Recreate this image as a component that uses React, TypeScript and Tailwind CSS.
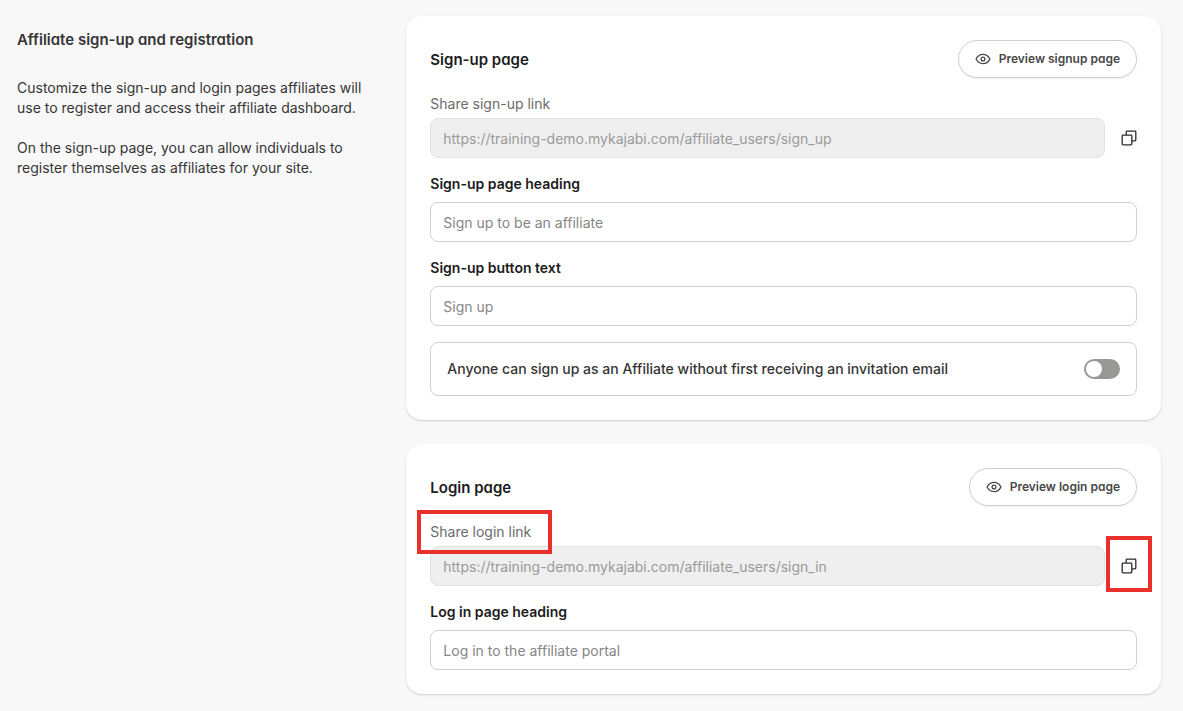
import React, { useState } from 'react';

const EyeIcon = () => (
  <svg className="size-4 shrink-0" viewBox="0 0 16 16" fill="none" stroke="currentColor" strokeWidth="1.3" aria-hidden="true">
    <path d="M1.2 8.3a.6.6 0 0 1 0-.6C2.6 5.2 5 3.4 8 3.400s5.400 1.800 6.800 4.300a.6.6 0 0 1 0 .6c-1.400 2.500-3.800 4.300-6.800 4.300S2.600 10.800 1.200 8.300Z" />
    <circle cx="8" cy="8" r="1.9" />
  </svg>
);

const CopyIcon = () => (
  <svg className="size-4" viewBox="0 0 16 16" fill="none" stroke="currentColor" strokeWidth="1.3" aria-hidden="true">
    <path d="M5.2 5.200V2a.8.8 0 0 1 .8-.8H14a.8.8 0 0 1 .8.8v8a.8.8 0 0 1-.8.8h-3.200" />
    <rect x="1.2" y="5.2" width="9.6" height="9.6" rx=".8" />
  </svg>
);

interface CardProps {
  title: string;
  previewLabel: string;
  children: React.ReactNode;
}

const SettingsCard: React.FC<CardProps> = ({ title, previewLabel, children }) => (
  <section className="flex flex-col gap-4 rounded-2xl bg-white p-6 shadow-[0_1px_2px_rgba(0,0,0,0.18)]">
    <div className="flex items-center justify-between">
      <h3 className="pt-0.5 text-[15px] leading-5 font-semibold text-[#1c1c1c] [font-feature-settings:'cv11']">{title}</h3>
      <button
        type="button"
        className="flex h-[38px] items-center gap-2 rounded-full border border-[#d0d0d0] bg-white px-4 text-xs font-semibold text-[#484848] shadow-[0_1px_2px_rgba(0,0,0,0.06)] [font-feature-settings:'cv11'] hover:bg-gray-50"
      >
        <EyeIcon />
        {previewLabel}
      </button>
    </div>
    {children}
  </section>
);

interface ShareLinkProps {
  id: string;
  label: string;
  url: string;
  highlighted?: boolean;
}

const ShareLink: React.FC<ShareLinkProps> = ({ id, label, url, highlighted }) => (
  <div className="flex flex-col items-start gap-1">
    <label htmlFor={id} className="relative text-[#6b6b6b]">
      {label}
      {highlighted && (
        <span className="absolute -top-3 -right-[21px] -bottom-3 -left-[13px] border-4 border-[#e8312a]" />
      )}
    </label>
    <div className="flex w-full gap-4">
      <input
        id={id}
        value={url}
        disabled
        className="h-10 min-w-0 flex-1 rounded-lg border border-[#e2e2e2] bg-[#efefef] px-3 text-[#9a9a9a]"
      />
      <button type="button" aria-label="Copy link" className="relative flex h-10 items-center text-[#2c2c2c]">
        <CopyIcon />
        {highlighted && (
          <span className="absolute -inset-x-[15px] -top-2.5 -bottom-1.5 border-4 border-[#e8312a]" />
        )}
      </button>
    </div>
  </div>
);

interface FieldProps {
  id: string;
  label: string;
  placeholder: string;
}

const TextField: React.FC<FieldProps> = ({ id, label, placeholder }) => (
  <div className="flex flex-col gap-2">
    <label htmlFor={id} className="font-semibold text-[#1c1c1c]">
      {label}
    </label>
    <input
      id={id}
      placeholder={placeholder}
      className="h-10 w-full rounded-lg border border-[#d0d0d0] bg-white px-3 text-[#1c1c1c] placeholder:text-[#868686]"
    />
  </div>
);

export default function App() {
  const [openSignup, setOpenSignup] = useState(false);

  return (
    <main className="grid min-h-screen grid-cols-3 items-start gap-6 bg-[#f8f8f8] py-4 pr-[22px] pl-[17px] font-['Inter',sans-serif] text-sm leading-5 text-[#353535]">
      <div className="flex flex-col gap-5 pt-3.5">
        <h2 className="mb-2 text-[15px] leading-5 font-semibold [font-feature-settings:'cv11']">
          Affiliate sign-up and registration
        </h2>
        <p>
          Customize the sign-up and login pages affiliates will use to register and access their affiliate dashboard.
        </p>
        <p>On the sign-up page, you can allow individuals to register themselves as affiliates for your site.</p>
      </div>

      <div className="col-span-2 flex flex-col gap-6">
        <SettingsCard title="Sign-up page" previewLabel="Preview signup page">
          <ShareLink
            id="signup-link"
            label="Share sign-up link"
            url="https://training-demo.mykajabi.com/affiliate_users/sign_up"
          />
          <TextField id="signup-heading" label="Sign-up page heading" placeholder="Sign up to be an affiliate" />
          <TextField id="signup-button" label="Sign-up button text" placeholder="Sign up" />
          <div className="flex h-[54px] items-center justify-between rounded-lg border border-[#d0d0d0] px-4">
            <label htmlFor="open-signup" className="font-medium">
              Anyone can sign up as an Affiliate without first receiving an invitation email
            </label>
            <input
              id="open-signup"
              type="checkbox"
              role="switch"
              checked={openSignup}
              onChange={(e) => setOpenSignup(e.target.checked)}
              className="flex h-5 w-9 cursor-pointer appearance-none items-center rounded-full bg-[#999896] px-0.5 before:size-4 before:rounded-full before:bg-white checked:justify-end checked:bg-blue-600"
            />
          </div>
        </SettingsCard>

        <SettingsCard title="Login page" previewLabel="Preview login page">
          <ShareLink
            id="login-link"
            label="Share login link"
            url="https://training-demo.mykajabi.com/affiliate_users/sign_in"
            highlighted
          />
          <TextField id="login-heading" label="Log in page heading" placeholder="Log in to the affiliate portal" />
        </SettingsCard>
      </div>
    </main>
  );
}
